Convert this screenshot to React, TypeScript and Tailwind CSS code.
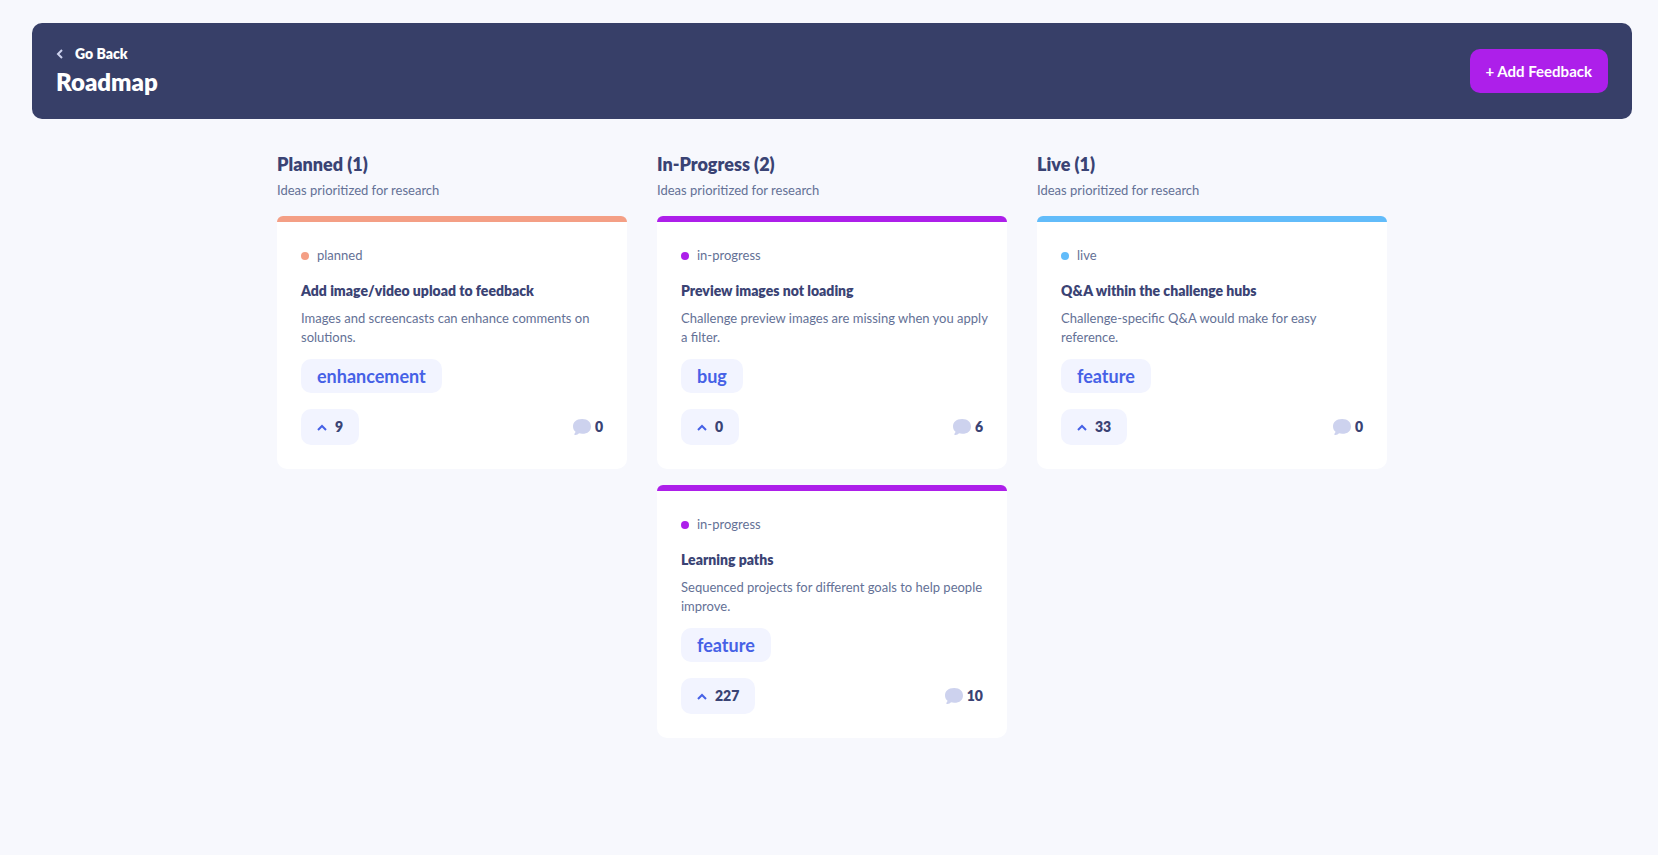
type Status = "planned" | "in-progress" | "live";

interface Feedback {
  title: string;
  description: string;
  category: string;
  upvotes: number;
  comments: number;
}

interface Column {
  name: string;
  status: Status;
  items: Feedback[];
}

const columns: Column[] = [
  {
    name: "Planned",
    status: "planned",
    items: [
      {
        title: "Add image/video upload to feedback",
        description: "Images and screencasts can enhance comments on solutions.",
        category: "enhancement",
        upvotes: 9,
        comments: 0,
      },
    ],
  },
  {
    name: "In-Progress",
    status: "in-progress",
    items: [
      {
        title: "Preview images not loading",
        description: "Challenge preview images are missing when you apply a filter.",
        category: "bug",
        upvotes: 0,
        comments: 6,
      },
      {
        title: "Learning paths",
        description: "Sequenced projects for different goals to help people improve.",
        category: "feature",
        upvotes: 227,
        comments: 10,
      },
    ],
  },
  {
    name: "Live",
    status: "live",
    items: [
      {
        title: "Q&A within the challenge hubs",
        description: "Challenge-specific Q&A would make for easy reference.",
        category: "feature",
        upvotes: 33,
        comments: 0,
      },
    ],
  },
];

const statusColor: Record<Status, string> = {
  planned: "bg-[#f49f85]",
  "in-progress": "bg-[#ad1fea]",
  live: "bg-[#62bcfa]",
};

function ArrowLeft() {
  return (
    <svg width="7" height="10" viewBox="0 0 7 10" fill="none" aria-hidden="true">
      <path d="M6 9 2 5l4-4" stroke="#cdd2ee" strokeWidth="2" />
    </svg>
  );
}

function ArrowUp() {
  return (
    <svg width="10" height="7" viewBox="0 0 10 7" fill="none" aria-hidden="true">
      <path d="m1 6 4-4 4 4" stroke="#4661e6" strokeWidth="2" />
    </svg>
  );
}

function CommentIcon() {
  return (
    <svg width="18" height="16" viewBox="0 0 18 16" aria-hidden="true">
      <path
        d="M2.62 16h-.67a.67.67 0 0 1-.48-1.15 3.87 3.87 0 0 0 1.08-2.02C.89 11.6 0 9.64 0 7.3 0 3.52 2.97 0 9.17 0 14.9 0 18 3.32 18 7.41c0 4.12-3.16 7.39-8.83 7.39-1.02 0-2.24-.15-3.23-.44-.76.92-2.23 1.64-3.32 1.64z"
        fill="#cdd2ee"
      />
    </svg>
  );
}

function FeedbackCard({ item, status }: { item: Feedback; status: Status }) {
  return (
    <article>
      <div className={`h-1.5 rounded-t-md ${statusColor[status]}`} />
      <div className="rounded-b-[10px] bg-white p-6">
        <p className="flex items-center gap-2 text-[13px] leading-[19px] text-[#647196]">
          <span className={`size-2 rounded-full ${statusColor[status]}`} />
          {status}
        </p>
        <h3 className="mt-4 text-sm leading-5 font-extrabold">{item.title}</h3>
        <p className="mt-2 -mr-3 text-[13px] leading-[19px] text-[#647196]">{item.description}</p>
        <p className="mt-3 w-fit rounded-[10px] bg-[#f2f4ff] px-4 py-1 text-lg leading-[26px] font-bold text-[#4661e6]">
          {item.category}
        </p>
        <div className="mt-4 flex items-center justify-between text-sm leading-5 font-extrabold">
          <button
            type="button"
            aria-label={`Upvote, ${item.upvotes} votes`}
            className="flex items-center gap-2 rounded-[10px] bg-[#f2f4ff] px-4 py-2"
          >
            <ArrowUp />
            {item.upvotes}
          </button>
          <span className="flex items-center gap-1">
            <CommentIcon />
            {item.comments}
          </span>
        </div>
      </div>
    </article>
  );
}

export default function App() {
  return (
    <div className="min-h-screen bg-[#f7f8fd] pt-[23px] pr-[26px] pb-8 pl-8 font-['Lato','Liberation_Sans',sans-serif] text-[#3a4374]">
      <header className="flex items-center justify-between rounded-[10px] bg-[#373f68] px-6 py-[19px] text-white">
        <div className="pt-0.5">
          <a href="#" className="flex w-fit items-center gap-3 text-sm leading-5 font-extrabold">
            <ArrowLeft />
            Go Back
          </a>
          <h1 className="text-2xl leading-9 font-extrabold">Roadmap</h1>
        </div>
        <button
          type="button"
          className="rounded-[10px] bg-[#ad1fea] px-4 py-3 text-[15px] leading-5 font-bold text-white"
        >
          + Add Feedback
        </button>
      </header>
      <main className="mx-auto mt-8 grid max-w-[1110px] grid-cols-1 items-start gap-[30px] md:grid-cols-3">
        {columns.map((column) => (
          <section key={column.status}>
            <h2 className="text-lg leading-[26px] font-extrabold">
              {`${column.name} (${column.items.length})`}
            </h2>
            <p className="mt-1 text-[13px] leading-[19px] text-[#647196]">
              Ideas prioritized for research
            </p>
            <div className="mt-4 flex flex-col gap-4">
              {column.items.map((item) => (
                <FeedbackCard key={item.title} item={item} status={column.status} />
              ))}
            </div>
          </section>
        ))}
      </main>
    </div>
  );
}
